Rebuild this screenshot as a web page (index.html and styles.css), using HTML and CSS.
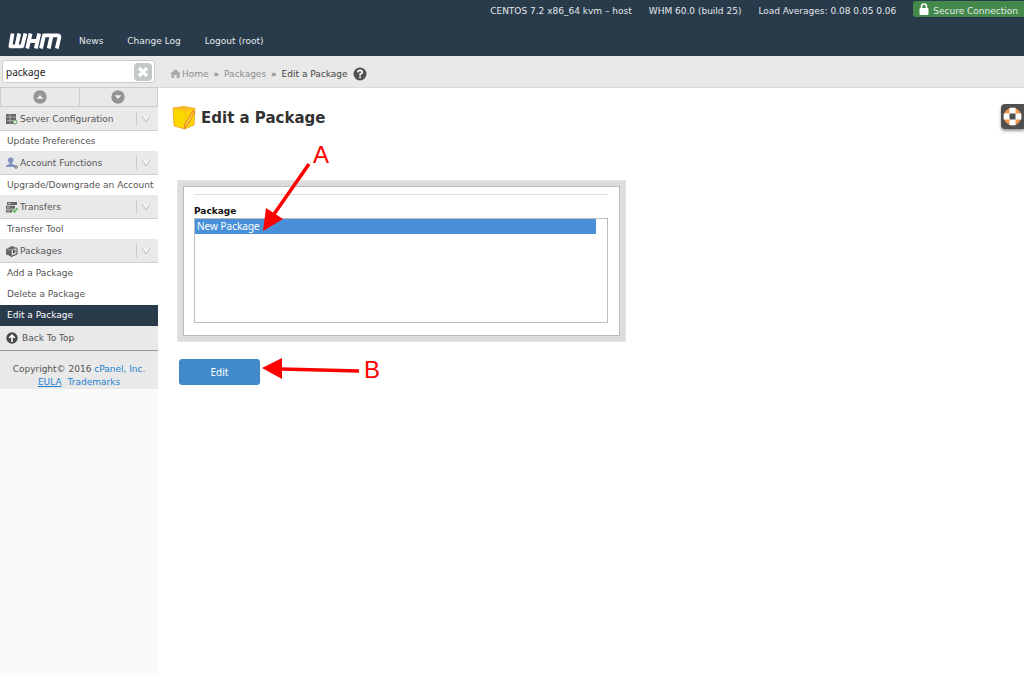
FILE: index.html
```html
<!DOCTYPE html>
<html lang="en">
<head>
<meta charset="utf-8">
<title>WHM - Edit a Package</title>
<link rel="stylesheet" href="styles.css">
</head>
<body>
<header class="header">
  <div class="status">
    <span>CENTOS 7.2 x86_64 kvm – host</span>
    <span>WHM 60.0 (build 25)</span>
    <span>Load Averages: 0.08 0.05 0.06</span>
    <span class="secure">
      <svg width="10" height="12" viewBox="0 0 10 12"><path d="M2.5 6V3.5a2.5 2.5 0 0 1 5 0V6" fill="none" stroke="#fff" stroke-width="1.6"/><rect x="0.5" y="5" width="9" height="7" rx="1" fill="#fff"/></svg>
      Secure Connection
    </span>
  </div>
  <nav class="topnav">
    <a class="logo" href="#" aria-label="WHM">
      <svg width="54" height="16" viewBox="0 0 54 16"><g fill="none" stroke="#fff" stroke-width="3.8" stroke-linejoin="round"><path d="M4.600 .5L2.400 13.300H14.200L17.400.5M11.200 .5L8.400 13.300"/><path d="M22.600.5L19.200 15.500M31.200.5L27.800 15.500M21 8H30"/><path d="M33 15.500L36 2.400H49.500Q51.800 2.400 51.300 4.600L48.800 15.500M43.600 2.400L40.700 15.500"/></g></svg>
    </a>
    <a href="#">News</a>
    <a href="#">Change Log</a>
    <a href="#">Logout (root)</a>
  </nav>
</header>
<div class="layout">
  <aside class="sidebar">
    <form class="search">
      <div class="search-box">
        <input type="text" value="package" aria-label="Search">
        <button type="button" class="clear" aria-label="Clear search"><svg width="18" height="18" viewBox="0 0 18 18"><rect width="18" height="18" rx="4" fill="#c5c8c8"/><path d="M5 5l8 8M13 5l-8 8" stroke="#fff" stroke-width="3.4"/></svg></button>
      </div>
    </form>
    <div class="toggles">
      <button type="button" aria-label="Collapse all"><svg width="14" height="14" viewBox="0 0 14 14"><circle cx="7" cy="7" r="6.7" fill="#949494"/><path d="M3.5 8.7L7 5l3.5 3.7z" fill="#eee"/></svg></button>
      <button type="button" aria-label="Expand all"><svg width="14" height="14" viewBox="0 0 14 14"><circle cx="7" cy="7" r="6.7" fill="#949494"/><path d="M3.5 5.3L7 9l3.5-3.7z" fill="#eee"/></svg></button>
    </div>
    <nav class="menu">
      <h2 class="group"><svg width="12" height="12" viewBox="0 0 12 12"><path d="M0 1h10v10H0z" fill="#666"/><path d="M1 4h9M1 7.5h7M4 1v10" stroke="#aaa"/><circle cx="9" cy="9" r="2" fill="#e9e9e9" stroke="#62a562"/></svg><a href="#">Server Configuration</a><span class="arrow"><svg width="10" height="8" viewBox="0 0 10 8"><path d="M1 1L5 7 9 1" fill="#f4f4f4" stroke="#bbb"/></svg></span></h2>
      <ul><li><a href="#">Update Preferences</a></li></ul>
      <h2 class="group"><svg width="12" height="12" viewBox="0 0 12 12"><circle cx="4.7" cy="3.3" r="2.8" fill="#8192bf"/><path d="M0 10q0-2.5 3.500-3V5h2.500v2q3.500.5 3.500 3z" fill="#8192bf"/><circle cx="10" cy="10" r="1.3" fill="#eee" stroke="#666"/></svg><a href="#">Account Functions</a><span class="arrow"><svg width="10" height="8" viewBox="0 0 10 8"><path d="M1 1L5 7 9 1" fill="#f4f4f4" stroke="#bbb"/></svg></span></h2>
      <ul><li><a href="#">Upgrade/Downgrade an Account</a></li></ul>
      <h2 class="group"><svg width="12" height="12" viewBox="0 0 12 12"><path d="M1 1h10v3H1zM0 4.7h9v3H0zM0 8.4h6v3H0z" fill="#666"/><path d="M2 2.500h3M1 6.200h3M1 10h3" stroke="#bbb"/><path d="M6.500 8.500L8.500 11 11.500 7" fill="none" stroke="#62b562" stroke-width="1.600"/></svg><a href="#">Transfers</a><span class="arrow"><svg width="10" height="8" viewBox="0 0 10 8"><path d="M1 1L5 7 9 1" fill="#f4f4f4" stroke="#bbb"/></svg></span></h2>
      <ul><li><a href="#">Transfer Tool</a></li></ul>
      <h2 class="group"><svg width="12" height="12" viewBox="0 0 12 12"><path d="M0 4l6-3 5 2v6l-5 2.500-6-2z" fill="#666"/><path d="M5 5l6-2v6l-6 2.500z" fill="#ddd" stroke="#444"/><path d="M1 4l4 1 6-2" fill="none" stroke="#aaa"/><path d="M7.500 5v3l1.500-1V5" fill="none" stroke="#444"/></svg><a href="#">Packages</a><span class="arrow"><svg width="10" height="8" viewBox="0 0 10 8"><path d="M1 1L5 7 9 1" fill="#f4f4f4" stroke="#bbb"/></svg></span></h2>
      <ul>
        <li><a href="#">Add a Package</a></li>
        <li><a href="#">Delete a Package</a></li>
        <li><a href="#" class="current" aria-current="page">Edit a Package</a></li>
      </ul>
    </nav>
    <a class="back" href="#"><svg width="12" height="12" viewBox="0 0 12 12"><circle cx="6" cy="6" r="5.700" fill="#484848"/><path d="M6 10V3M3.200 6L6 3.200 8.800 6" fill="none" stroke="#fff" stroke-width="1.600"/></svg>Back To Top</a>
    <footer class="legal">Copyright© 2016 <a href="#">cPanel, Inc.</a><br><a href="#" class="eula">EULA</a><a href="#">Trademarks</a></footer>
  </aside>
  <main class="main">
    <nav class="crumbs" aria-label="Breadcrumb">
      <a href="#" class="home"><svg width="11" height="9" viewBox="0 0 11 9"><path d="M0 5l5.500-5L11 5H9.500v4H6.700V6H4.300v3H1.500V5z" fill="#aaa"/></svg>Home</a>
      <span>»</span>
      <a href="#">Packages</a>
      <span>»</span>
      <span class="here">Edit a Package</span>
      <button type="button" class="help" aria-label="Help"><svg width="14" height="14" viewBox="0 0 14 14"><circle cx="7" cy="7" r="6.500" fill="#505050"/><path d="M4.700 5.400Q4.800 3.300 7 3.300T9.300 5.200Q9.300 6.300 7.100 7.300V8.500M7.100 9.600v1.600" fill="none" stroke="#fff" stroke-width="1.700"/></svg></button>
    </nav>
    <section class="content">
      <h1><svg width="24" height="24" viewBox="0 0 24 24"><path d="M1 2l11-1.500L23 2.500 22 19l-9 4L2 20z" fill="#fdd800" stroke="#e8a528" stroke-width=".8"/><path d="M1.500 2.500L14 5.500 23 2.500M14 5.500L13 23" fill="none" stroke="#f3b820" stroke-width=".7"/><path d="M1 2l11-1.500L23 2.500 14 4z" fill="#f5b82a"/><path d="M21 4.500l2 1.500L15 20l-3 3 .500-4z" fill="#fdb515" stroke="#db7c2e" stroke-width=".8"/><path d="M20.500 8l-6.500 11" stroke="#ffe070"/></svg>Edit a Package</h1>
      <form>
        <div class="panel">
          <div class="panel-inner">
            <label for="pkg">Package</label>
            <select id="pkg" size="7"><option selected>New Package</option></select>
          </div>
        </div>
        <button type="button" class="edit">Edit</button>
      </form>
    </section>
  </main>
</div>
<button type="button" class="support" aria-label="Support"><svg width="19" height="19" viewBox="0 0 19 19"><circle cx="9.500" cy="9.500" r="6.500" fill="none" stroke="#f29b4b" stroke-width="4.600"/><path d="M9.500 .7v5.800M9.500 12.500v5.800M.7 9.500h5.800M12.500 9.500h5.800" stroke="#fff" stroke-width="6"/></svg></button>
<svg class="notes" width="210" height="250" viewBox="180 140 210 250">
  <path d="M309 164L272 217M359 371L281 369" stroke="#f00" stroke-width="3.500"/>
  <path d="M263 231L266 208 283 219zM262 368L282 358V379z" fill="#f00"/>
  <text x="313" y="163">A</text>
  <text x="364" y="378">B</text>
</svg>
</body>
</html>
```
FILE: styles.css
```css
* { box-sizing: border-box; }
body {
  margin: 0;
  min-height: 100vh;
  display: flex;
  flex-direction: column;
  background: #fff;
  color: #555;
  font: 9px/12px "DejaVu Sans", sans-serif;
}
a { color: inherit; text-decoration: none; }
svg { display: block; flex: none; }
button { border: 0; padding: 0; background: none; font: inherit; }
.header { background: #293a4a; color: #e4e8ea; height: 56px; }
.status {
  height: 21px;
  display: flex;
  justify-content: flex-end;
  align-items: center;
  gap: 17px;
}
.secure {
  display: flex;
  align-items: center;
  gap: 4px;
  height: 16px;
  margin-bottom: 3px;
  padding: 3px 6px 0 6px;
  border-radius: 3px 0 0 3px;
  background: #43894a;
}
.secure svg { margin-bottom: 4px; }
.topnav { display: flex; align-items: center; gap: 24px; height: 39px; padding-left: 8px; }
.logo { margin-right: -7px; }
.layout { flex: 1; display: flex; }
.sidebar { width: 158px; flex: none; background: #fafafa; }
.search { height: 31px; padding: 4px 3px 4px 2px; background: #e9e9e9; }
.search-box {
  display: flex;
  align-items: center;
  height: 23px;
  padding: 0 2px 0 3px;
  background: #fff;
  border: 1px solid #ccc;
  border-radius: 3px;
}
.search input {
  flex: 1;
  min-width: 0;
  border: 0;
  padding: 0;
  outline: 0;
  background: none;
  color: #222;
  font: 10px "Noto Sans", sans-serif;
}
.toggles { display: flex; height: 20px; background: #e9e9e9; border: 1px solid #ccc; }
.toggles button { flex: 1; display: flex; align-items: center; justify-content: center; }
.toggles button + button { border-left: 1px solid #ccc; }
.group {
  display: flex;
  align-items: center;
  gap: 2px;
  height: 24px;
  margin: 0;
  padding: 0 7px 0 6px;
  background: #e9e9e9;
  border-bottom: 1px solid #d0d0d0;
  font-size: inherit;
  font-weight: normal;
}
.arrow { margin-left: auto; padding: 3px 0 3px 4px; border-left: 1px solid #ccc; }
.menu ul { margin: 0; padding: 0; list-style: none; background: #fff; }
.menu li a { display: block; height: 20px; padding: 4px 7px; white-space: nowrap; }
.menu ul:last-child a { height: 21px; }
.menu li .current { background: #293a4a; color: #fff; }
.back {
  display: flex;
  align-items: center;
  gap: 4px;
  height: 25px;
  padding-left: 6px;
  background: #e9e9e9;
  border-bottom: 1px solid #999;
}
.legal { padding: 12px 0 0; background: #e9e9e9; text-align: center; line-height: 13px; }
.legal a { color: #1b80d0; }
.legal .eula { margin-right: 6px; text-decoration: underline; }
.main { flex: 1; min-width: 0; }
.crumbs {
  display: flex;
  align-items: center;
  gap: 5px;
  height: 32px;
  padding: 4px 12px 0;
  background: #e9e9e9;
  border-bottom: 1px solid #d8d8d8;
}
.crumbs a { color: #8c8c8c; }
.crumbs .home { display: flex; align-items: center; gap: 1px; }
.here { color: #444; }
.content { padding: 18px 14px; }
h1 {
  display: flex;
  align-items: center;
  gap: 5px;
  margin: 0;
  color: #333;
  font-size: 15px;
  line-height: 24px;
}
.panel {
  max-width: 449px;
  margin: 50px 0 17px 5px;
  padding: 5px;
  background: #ddd;
  border: 1px solid #e4e4e4;
}
.panel-inner { padding: 7px 11px 12px 10px; background: #fff; border: 1px solid #bbb; }
.panel label {
  display: block;
  padding: 10px 0 1px;
  border-top: 1px solid #ddd;
  color: #111;
  font-weight: bold;
}
.panel select {
  display: block;
  width: 100%;
  height: 105px;
  padding: 0 11px 0 0;
  overflow: hidden;
  border: 1px solid #bbb;
  border-radius: 0;
  outline: 0;
  background: #fff;
  font: 10px/15px "Noto Sans", sans-serif;
}
.panel option { min-height: 15px; padding: 0 2px; }
.panel option:checked {
  background: linear-gradient(#4a90d9, #4a90d9);
  color: #fff;
  -webkit-text-fill-color: #fff;
}
.edit {
  display: block;
  width: 81px;
  height: 26px;
  margin-left: 7px;
  border: 1px solid #3d85c3;
  border-radius: 3px;
  background: #428bca;
  color: #fff;
  font: 10px "Noto Sans", sans-serif;
}
.support {
  position: absolute;
  top: 104px;
  right: 0;
  padding: 3px 2px 3px 2px;
  border-radius: 4px 0 0 4px;
  background: #505050;
  box-shadow: 0 2px 3px #999;
}
.notes { position: absolute; top: 140px; left: 180px; pointer-events: none; }
.notes text { fill: #f00; font: 24px "Liberation Sans", sans-serif; }
```
